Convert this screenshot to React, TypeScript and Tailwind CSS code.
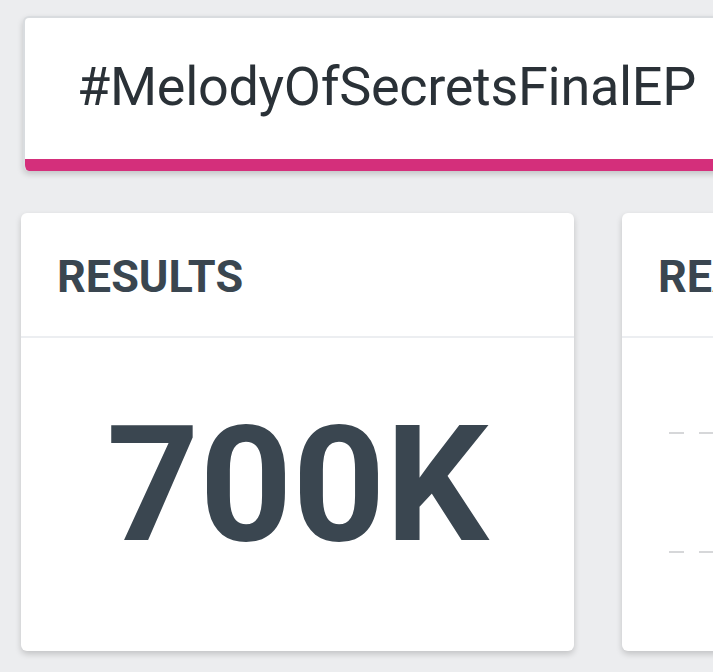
const CARD_SHADOW = 'shadow-[0_3px_6px_rgba(0,0,0,0.18)]'

function StatCard({ title, children }: { title: string; children: React.ReactNode }) {
  return (
    <div className={`flex h-[438px] w-[553px] shrink-0 flex-col rounded-md bg-white ${CARD_SHADOW}`}>
      <div className="h-[125px] border-b-2 border-[#eceef1] pl-[36px] pt-[41px]">
        <h2 className="text-[45px] font-bold leading-none text-[#3a4650]">{title}</h2>
      </div>
      <div className="flex-1">{children}</div>
    </div>
  )
}

function Placeholder() {
  return (
    <div className="flex flex-col gap-[117px] pl-[47px] pt-[94px]">
      {[0, 1].map((row) => (
        <div key={row} className="flex gap-[15px]">
          {[0, 1, 2, 3].map((dash) => (
            <span key={dash} className="block h-[2px] w-[15px] bg-[#d6d7d9]" />
          ))}
        </div>
      ))}
    </div>
  )
}

export default function App() {
  return (
    <div
      className="h-[672px] w-[713px] overflow-hidden bg-[#ecedef]"
      style={{ fontFamily: 'Roboto, "Liberation Sans", sans-serif' }}
    >
      <div
        className={`ml-[23px] mt-[16px] flex h-[155px] w-[740px] flex-col overflow-hidden rounded-md border-l-2 border-t-2 border-[#d9dcdf] bg-white ${CARD_SHADOW}`}
      >
        <div className="flex flex-1 items-center pl-[52px] pb-[3px]">
          <h1 className="text-[54px] font-normal leading-none tracking-[-0.3px] text-[#2a3137]">
            #MelodyOfSecretsFinalEP
          </h1>
        </div>
        <div className="h-[12px] bg-[#d42f7b]" />
      </div>

      <div className="ml-[21px] mt-[42px] flex gap-[48px]">
        <StatCard title="RESULTS">
          <p className="pt-[66px] text-center text-[162px] font-bold leading-none text-[#3a4650]">
            700K
          </p>
        </StatCard>
        <StatCard title="REACH">
          <Placeholder />
        </StatCard>
      </div>
    </div>
  )
}
